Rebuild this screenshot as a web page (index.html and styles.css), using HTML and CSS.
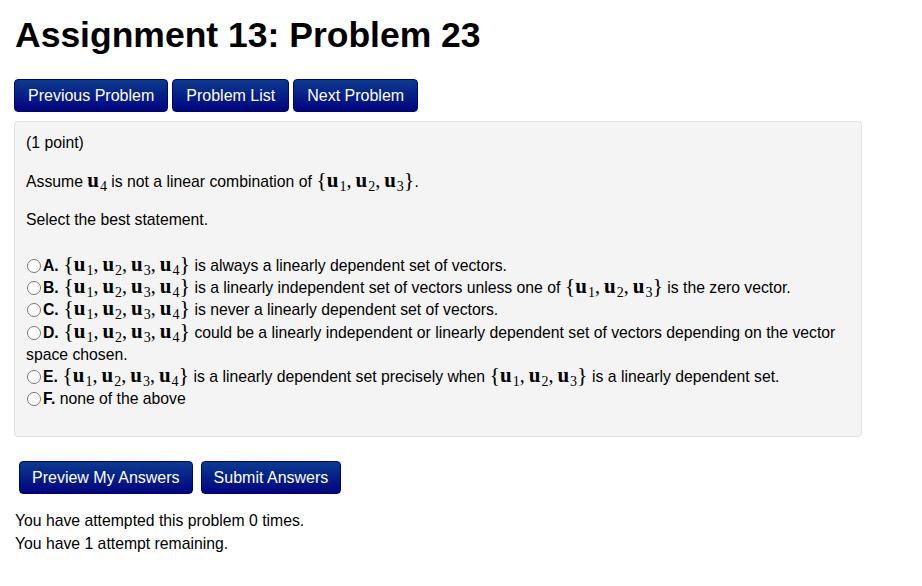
FILE: index.html
```html
<!DOCTYPE html>
<html lang="en">
<head>
    <meta charset="UTF-8">
    <meta name="viewport" content="width=device-width, initial-scale=1.0">
    <title>Assignment 13: Problem 23</title>
    <link rel="stylesheet" href="styles.css">
</head>
<body>
    <div class="page">
        <h1 class="title">Assignment 13: Problem 23</h1>

        <div class="nav">
            <button class="btn">Previous Problem</button>
            <button class="btn">Problem List</button>
            <button class="btn">Next Problem</button>
        </div>

        <div class="problem">
            <p class="points">(1 point)</p>
            <p class="stmt">Assume <span class="m"><b>u</b><sub>4</sub></span> is not a linear combination of
                <span class="m"><span class="br">{</span><b>u</b><sub>1</sub><span class="c">,</span><b>u</b><sub>2</sub><span class="c">,</span><b>u</b><sub>3</sub><span class="br">}</span></span>.</p>
            <p class="select">Select the best statement.</p>

            <div class="options">
                <label class="opt"><input type="radio" name="ans"><strong>A.</strong> <span class="m"><span class="br">{</span><b>u</b><sub>1</sub><span class="c">,</span><b>u</b><sub>2</sub><span class="c">,</span><b>u</b><sub>3</sub><span class="c">,</span><b>u</b><sub>4</sub><span class="br">}</span></span> is always a linearly dependent set of vectors.</label>
                <label class="opt"><input type="radio" name="ans"><strong>B.</strong> <span class="m"><span class="br">{</span><b>u</b><sub>1</sub><span class="c">,</span><b>u</b><sub>2</sub><span class="c">,</span><b>u</b><sub>3</sub><span class="c">,</span><b>u</b><sub>4</sub><span class="br">}</span></span> is a linearly independent set of vectors unless one of <span class="m"><span class="br">{</span><b>u</b><sub>1</sub><span class="c">,</span><b>u</b><sub>2</sub><span class="c">,</span><b>u</b><sub>3</sub><span class="br">}</span></span> is the zero vector.</label>
                <label class="opt"><input type="radio" name="ans"><strong>C.</strong> <span class="m"><span class="br">{</span><b>u</b><sub>1</sub><span class="c">,</span><b>u</b><sub>2</sub><span class="c">,</span><b>u</b><sub>3</sub><span class="c">,</span><b>u</b><sub>4</sub><span class="br">}</span></span> is never a linearly dependent set of vectors.</label>
                <label class="opt"><input type="radio" name="ans"><strong>D.</strong> <span class="m"><span class="br">{</span><b>u</b><sub>1</sub><span class="c">,</span><b>u</b><sub>2</sub><span class="c">,</span><b>u</b><sub>3</sub><span class="c">,</span><b>u</b><sub>4</sub><span class="br">}</span></span> could be a linearly independent or linearly dependent set of vectors depending on the vector space chosen.</label>
                <label class="opt"><input type="radio" name="ans"><strong>E.</strong> <span class="m"><span class="br">{</span><b>u</b><sub>1</sub><span class="c">,</span><b>u</b><sub>2</sub><span class="c">,</span><b>u</b><sub>3</sub><span class="c">,</span><b>u</b><sub>4</sub><span class="br">}</span></span> is a linearly dependent set precisely when <span class="m"><span class="br">{</span><b>u</b><sub>1</sub><span class="c">,</span><b>u</b><sub>2</sub><span class="c">,</span><b>u</b><sub>3</sub><span class="br">}</span></span> is a linearly dependent set.</label>
                <label class="opt"><input type="radio" name="ans"><strong>F.</strong> none of the above</label>
            </div>
        </div>

        <div class="submit">
            <button class="btn">Preview My Answers</button>
            <button class="btn">Submit Answers</button>
        </div>

        <p class="attempts">You have attempted this problem 0 times.<br>You have 1 attempt remaining.</p>
    </div>
</body>
</html>
```

FILE: styles.css
```css
*{
    font-family: "Liberation Sans", Arial, Helvetica, sans-serif;
    box-sizing: border-box;
}
body{
    margin: 0;
    color: #000;
    font-size: 15.75px;
}
.page{
    padding: 0 0 0 14px;
    width: 862px;
}
.title{
    margin: 15px 0 0 1px;
    font-size: 35.5px;
    line-height: 40px;
    font-weight: bold;
}
.nav{
    display: flex;
    gap: 4px;
    margin-top: 24px;
}
.btn{
    height: 33px;
    padding: 0 13px;
    font-size: 16px;
    color: #fff;
    background: linear-gradient(to bottom, #0b3a8f, #00047f);
    border: 1px solid #00056e;
    border-radius: 4px;
    cursor: pointer;
}
.problem{
    margin-top: 9px;
    background-color: #f4f4f4;
    border: 1px solid #e2e2e2;
    border-radius: 4px;
    padding: 10px 11px 26px 11px;
}
.problem p{
    margin: 0;
    line-height: 22px;
}
.stmt{
    padding-top: 17px;
}
.select{
    padding-top: 16px;
}
.options{
    margin-top: 24px;
    line-height: 22.2px;
}
.opt{
    display: block;
}
.opt input{
    width: 14px;
    height: 14px;
    margin: 0 2px 0 1px;
    vertical-align: -2px;
}
.m{
    white-space: nowrap;
    line-height: 0;
}
.m b, .m sub, .m .br, .m .c{
    font-family: "Liberation Serif", "Times New Roman", serif;
}
.m b{
    font-size: 21px;
    font-weight: bold;
}
.m sub{
    font-size: 14px;
    vertical-align: -4px;
    line-height: 0;
    margin-left: 1px;
}
.m .br{
    font-size: 22px;
}
.m .c{
    font-size: 20px;
    margin-right: 4px;
}
.submit{
    display: flex;
    gap: 8px;
    margin: 24px 0 0 5px;
}
.submit .btn{
    padding: 0 12px;
}
.attempts{
    margin: 15px 0 0 1px;
    line-height: 23px;
}
```
